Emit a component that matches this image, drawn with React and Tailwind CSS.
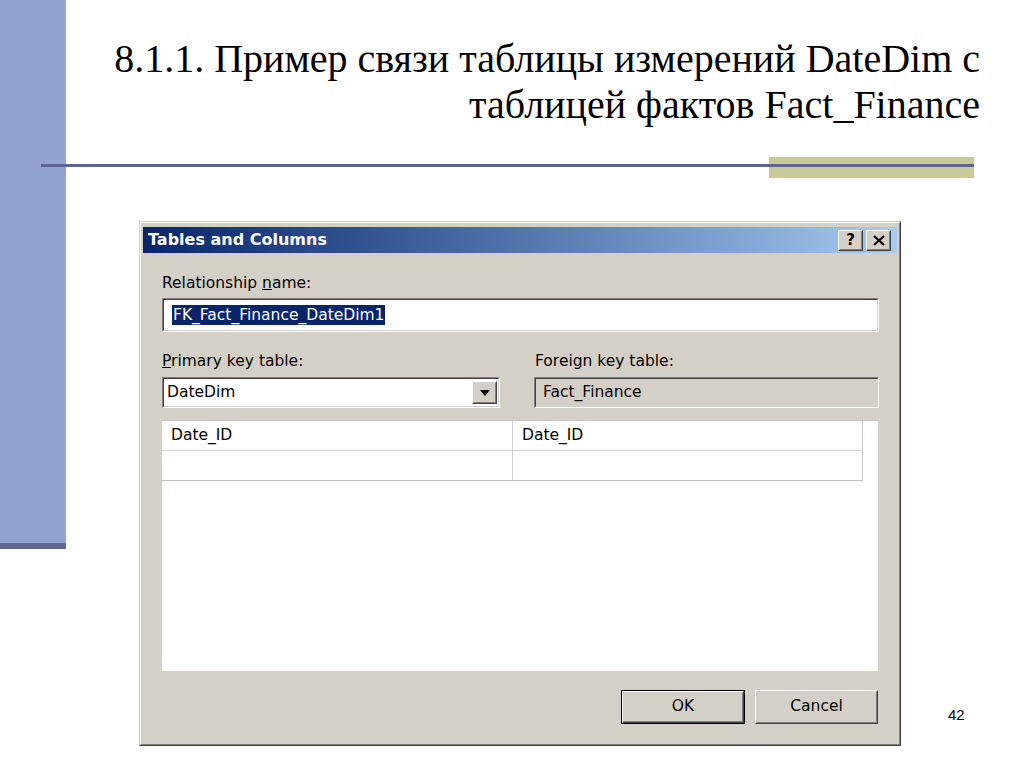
import React from "react";

const ui = { fontFamily: '"DejaVu Sans", "Liberation Sans", sans-serif' };

function Raised({ className = "", children }) {
  return (
    <div className={"border border-t-white border-l-white border-r-[#404040] border-b-[#404040] " + className}>
      <div className="h-full w-full border border-t-[#d4d0c8] border-l-[#d4d0c8] border-r-[#808080] border-b-[#808080] flex items-center justify-center">
        {children}
      </div>
    </div>
  );
}

function Sunken({ className = "", inner = "", children }) {
  return (
    <div className={"border border-t-[#808080] border-l-[#808080] border-r-white border-b-white " + className}>
      <div className={"h-full w-full border border-t-[#404040] border-l-[#404040] border-r-[#d4d0c8] border-b-[#d4d0c8] " + inner}>
        {children}
      </div>
    </div>
  );
}

export default function App() {
  return (
    <div className="relative w-[1024px] h-[767px] bg-white flex overflow-hidden" style={{ fontFamily: '"Liberation Serif", serif' }}>
      {/* left sidebar */}
      <div className="w-[66px] h-[549px] shrink-0 bg-[#93a3cf] border-b-[6px] border-b-[#5f6893]" />

      <div className="flex-1 flex flex-col">
        {/* heading */}
        <div className="pt-[36px] pr-[44px] text-right text-[40px] leading-[46px] text-black">
          <div>8.1.1. Пример связи таблицы измерений DateDim с</div>
          <div>таблицей фактов Fact_Finance</div>
        </div>

        {/* rule */}
        <div className="relative mt-[29px] h-[21px] ml-[-25px] w-[933px] flex justify-end">
          <div className="w-[205px] h-[21px] bg-[#c8ca9a]" />
          <div className="absolute left-0 right-0 top-[7px] h-[3px] bg-[#5d6490]" />
        </div>

        {/* dialog */}
        <div className="mt-[43px] ml-[73px] w-[762px] h-[525px] border border-t-[#d4d0c8] border-l-[#d4d0c8] border-r-[#404040] border-b-[#404040]" style={ui}>
          <div className="h-full w-full border border-t-white border-l-white border-r-[#808080] border-b-[#808080] bg-[#d4d0c8] px-[2px] pt-[4px] pb-[2px] flex flex-col">
            {/* title bar */}
            <div className="h-[26px] shrink-0 flex items-center justify-between pl-[5px] pr-[6px] bg-gradient-to-r from-[#0a246a] to-[#a6caf0]">
              <span className="text-white font-bold text-[16px] leading-none">Tables and Columns</span>
              <div className="flex gap-[3px]">
                <Raised className="w-[25px] h-[21px] bg-[#d4d0c8]">
                  <span className="text-[15px] font-bold leading-none text-black">?</span>
                </Raised>
                <Raised className="w-[25px] h-[21px] bg-[#d4d0c8]">
                  <svg width="12" height="11" viewBox="0 0 12 11">
                    <path d="M1 1 L11 10 M11 1 L1 10" stroke="black" strokeWidth="2.2" />
                  </svg>
                </Raised>
              </div>
            </div>

            {/* body */}
            <div className="flex-1 flex flex-col pl-[19px] pr-[18px] text-[15.5px] text-black">
              <div className="mt-[21px] leading-[18px]">
                Relationship <span className="underline">n</span>ame:
              </div>
              <Sunken className="mt-[6px] h-[34px] w-[717px] bg-white" inner="flex items-center pl-[8px]">
                <span className="bg-[#0a246a] text-white leading-[20px] px-[1px]">FK_Fact_Finance_DateDim1</span>
              </Sunken>

              <div className="mt-[20px] flex">
                <div className="w-[338px]">
                  <div className="leading-[18px]">
                    <span className="underline">P</span>rimary key table:
                  </div>
                  <Sunken className="mt-[7px] h-[31px] w-[338px] bg-white" inner="flex items-center justify-between pl-[3px] pr-[1px]">
                    <span>DateDim</span>
                    <Raised className="w-[25px] h-[23px] bg-[#d4d0c8]">
                      <svg width="10" height="6" viewBox="0 0 10 6">
                        <path d="M0 0 H10 L5 6 Z" fill="black" />
                      </svg>
                    </Raised>
                  </Sunken>
                </div>
                <div className="ml-[34px] w-[345px]">
                  <div className="leading-[18px] pl-[1px]">Foreign key table:</div>
                  <Sunken className="mt-[7px] h-[31px] w-[345px] bg-[#d4d0c8]" inner="flex items-center pl-[7px]">
                    <span>Fact_Finance</span>
                  </Sunken>
                </div>
              </div>

              {/* grid area */}
              <div className="mt-[12px] w-[716px] h-[251px] shrink-0 bg-white border-t border-t-[#c8c8c8]">
                <div className="w-[701px] border-r border-r-[#c8c8c8] shadow-[0_1px_0_#c0c0c0]">
                  <div className="flex h-[30px] border-b border-b-[#d0d0d0]">
                    <div className="w-[351px] border-r border-r-[#d0d0d0] flex items-center pl-[9px]">Date_ID</div>
                    <div className="flex-1 flex items-center pl-[9px]">Date_ID</div>
                  </div>
                  <div className="flex h-[29px]">
                    <div className="w-[351px] border-r border-r-[#d0d0d0]" />
                    <div className="flex-1" />
                  </div>
                </div>
              </div>

              {/* buttons */}
              <div className="mt-[19px] flex justify-end gap-[10px] pr-[1px]">
                <div className="border border-black">
                  <Raised className="w-[122px] h-[32px] bg-[#d4d0c8]">
                    <span>OK</span>
                  </Raised>
                </div>
                <Raised className="w-[123px] h-[34px] bg-[#d4d0c8]">
                  <span>Cancel</span>
                </Raised>
              </div>
            </div>
          </div>
        </div>
      </div>

      {/* page number */}
      <div className="absolute left-[948px] top-[704px] text-[15px] text-black" style={{ fontFamily: '"Liberation Sans", sans-serif' }}>42</div>
    </div>
  );
}
